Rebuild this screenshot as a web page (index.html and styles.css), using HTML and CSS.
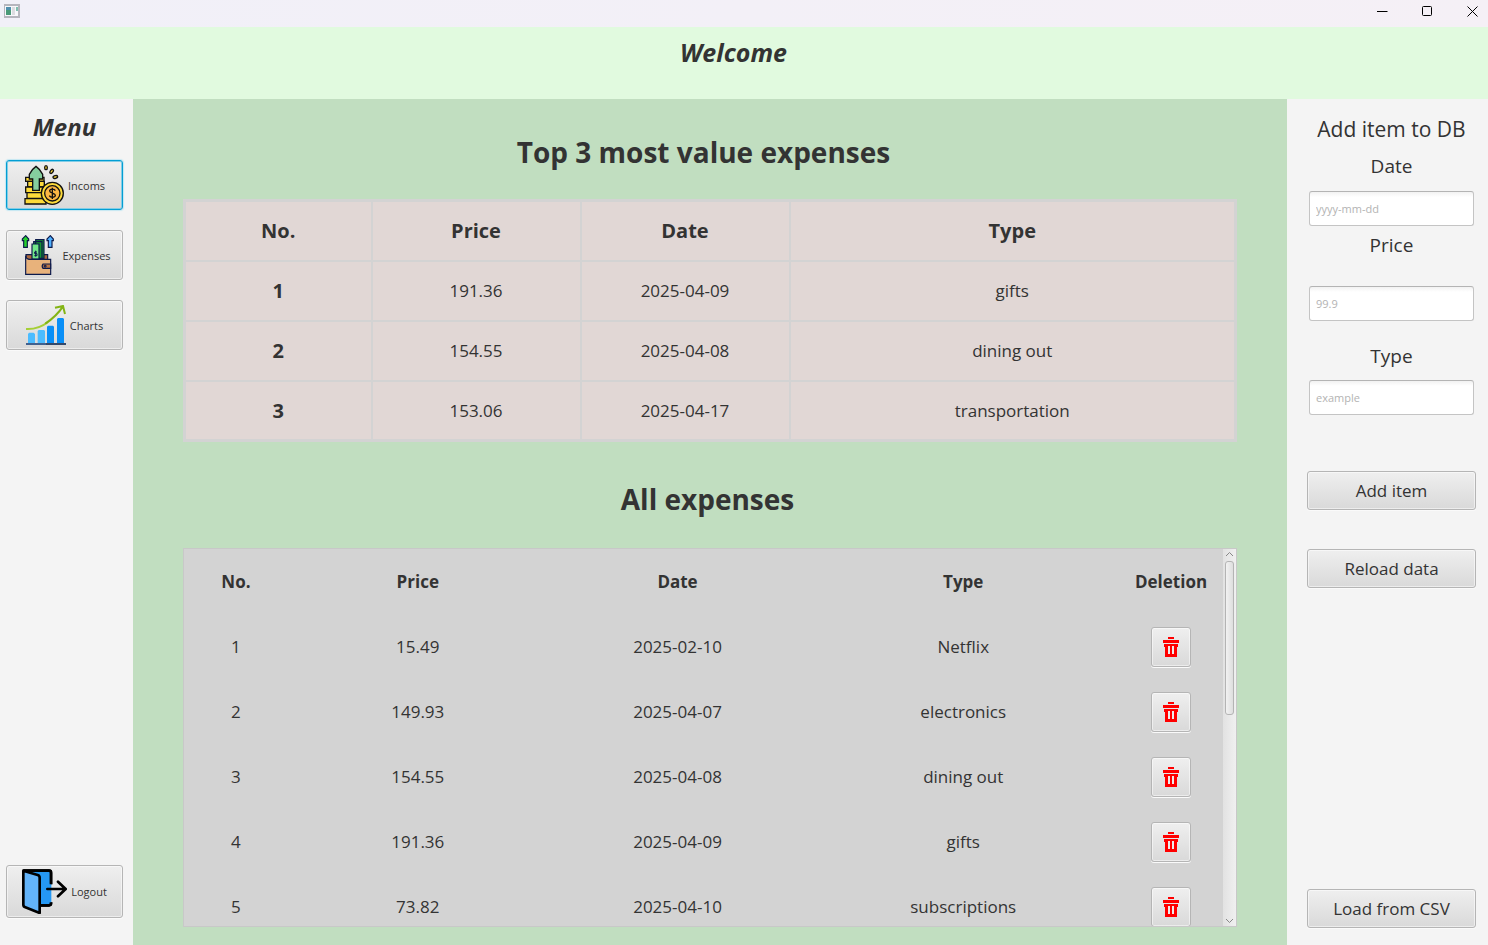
FILE: index.html
```
<!DOCTYPE html>
<html lang="en">
<head>
<meta charset="utf-8">
<title>Expenses</title>
<link rel="stylesheet" href="styles.css">
</head>
<body>
<svg class="sprite" aria-hidden="true">
  <symbol id="trash" viewBox="0 0 16 20">
    <path fill="#f00" d="M5 0h6v2H5zM0 3h16v3H0zM1 7h14v3h-1v10H2V10H1z"/>
    <path fill="#ececec" d="M5 9h2v8H5zM9 9h2v8H9z"/>
  </symbol>
</svg>
<div class="window">
  <div class="titlebar">
    <svg class="app-icon" width="16" height="14" viewBox="0 0 16 14" aria-hidden="true">
      <path fill="#b5b5bd" d="M0 0h16v14H0z"/>
      <path fill="#f7f7fa" d="M1 2h13v10H1z"/>
      <path fill="#4f8fae" d="M2 3h5v8H2z"/>
      <path fill="#4a9a78" d="M2 6h5v5H2z"/>
      <path fill="#dcdce0" d="M8 3h3v8H8z"/>
      <path fill="#7fbfb0" d="M12 3h2v4h-2z"/>
    </svg>
    <div class="window-controls">
      <button type="button" class="window-button" aria-label="Minimize"><svg width="11" height="11" viewBox="0 0 11 11"><path d="M0 5.500h10.500"/></svg></button>
      <button type="button" class="window-button" aria-label="Maximize"><svg width="11" height="11" viewBox="0 0 11 11"><rect x=".5" y=".5" width="9" height="9" rx="1"/></svg></button>
      <button type="button" class="window-button" aria-label="Close"><svg width="11" height="11" viewBox="0 0 11 11"><path d="M.5.500l10 10M10.500.500l-10 10"/></svg></button>
    </div>
  </div>
  <header class="banner"><h1 class="banner-title">Welcome</h1></header>
  <div class="content">
    <nav class="menu">
      <h2 class="menu-title">Menu</h2>
      <button type="button" class="button menu-button focused">
        <svg width="40" height="41" viewBox="72 45 120 123" aria-hidden="true">
          <g stroke="#111" stroke-width="4" fill="#fddb3a">
            <path d="M77 82h55v12H77z"/><path d="M83 94h50v17H83z"/>
            <path d="M77 111h56v17H77z"/><path d="M81 128h50v17H81z"/>
            <path d="M75 146h63v16H75z"/>
            <path fill="#85cf9f" d="M108 49q12 8 20 24v14h-10v34H98V87H88V73q8-16 20-24z"/>
            <circle cx="157" cy="130" r="33"/>
            <circle cx="157" cy="130" r="23" fill="#fbb743"/>
            <ellipse cx="138" cy="53" rx="4" ry="6"/>
            <ellipse cx="155" cy="64" rx="4" ry="7" transform="rotate(35 155 64)"/>
            <ellipse cx="166" cy="81" rx="7" ry="4" transform="rotate(-15 166 81)"/>
          </g>
          <path fill="none" stroke="#111" stroke-width="4" d="M166 122c-3-6-17-6-17 1s17 6 17 13-14 8-18 1M157 113v34"/>
        </svg>
        <span>Incoms</span>
      </button>
      <button type="button" class="button menu-button">
        <svg width="40" height="40" viewBox="54 39 120 120" aria-hidden="true">
          <g stroke="#0c1a4b" stroke-width="3.500">
            <path fill="#25d12c" d="M77 41l9 10v5h-4v20H71V56h-4v-5z"/>
            <path fill="#4eb0ff" d="M151 41l9 10v5h-4v20h-11V56h-4v-5z"/>
            <path fill="#a8673d" d="M78 98h65v16H78z"/>
            <path fill="#159333" d="M107 53h25v56h-25zM101 59h25v50h-25z"/>
            <path fill="#71e889" d="M96 66h21v45H96z"/>
            <path fill="#e8b27b" d="M77 101q2 11 12 11h63v45H77z"/>
            <path fill="#b97545" d="M129 126h23v13h-23q-5-6 0-13z"/>
          </g>
          <path fill="none" stroke="#0c1a4b" stroke-width="3" d="M111 90h-7v5h7v6h-8M107 86v18M133 130h5v5h-5z"/>
        </svg>
        <span>Expenses</span>
      </button>
      <button type="button" class="button menu-button">
        <svg width="40" height="40" viewBox="78 42 120 120" aria-hidden="true">
          <path fill="#4bbcff" d="M84 129l3-4h14l4 4v27H84zM113 120l3-3h16l3 3v36h-22z"/>
          <path fill="#098ff7" d="M141 107l3-3h15l3 3v49h-21zM171 84l3-3h15l3 3v72h-21z"/>
          <path fill="#41618e" d="M78 156h60v6H78z"/><path fill="#34496a" d="M138 156h60v6h-60z"/>
          <path fill="none" stroke="#a5cf35" stroke-width="6" d="M78 114q37 2 66-21"/>
          <path fill="none" stroke="#83b414" stroke-width="6" d="M136 98q34-23 53-52M165 50l24-5 6 24"/>
        </svg>
        <span>Charts</span>
      </button>
      <button type="button" class="button menu-button logout">
        <svg width="45" height="45" viewBox="63 38 135 135" aria-hidden="true">
          <path fill="#2598f4" stroke="#000" stroke-width="8" stroke-linejoin="round" d="M117 147h27q6 0 6-6v-3M150 84V49q0-6-6-6H67"/>
          <path fill="#2598f4" d="M117 47h29v96h-29zM144 82h7v58h-7z"/>
          <path fill="none" stroke="#000" stroke-width="8" d="M67 43h77q6 0 6 6v35M150 138v3q0 6-6 6h-27"/>
          <path fill="#63b4fa" stroke="#000" stroke-width="8" stroke-linejoin="round" d="M67 43l43 13q6 2 6 8v106l-43-17q-6-2-6-8z"/>
          <path fill="none" stroke="#000" stroke-width="8" stroke-linecap="round" stroke-linejoin="round" d="M139 98h54M171 76l23 22-23 22"/>
        </svg>
        <span>Logout</span>
      </button>
    </nav>
    <main class="main">
      <h2 class="section-title top-title">Top 3 most value expenses</h2>
      <table class="top-table">
        <colgroup><col class="w-no"><col class="w-mid"><col class="w-mid"><col></colgroup>
        <thead><tr><th>No.</th><th>Price</th><th>Date</th><th>Type</th></tr></thead>
        <tbody>
          <tr><th>1</th><td>191.36</td><td>2025-04-09</td><td>gifts</td></tr>
          <tr><th>2</th><td>154.55</td><td>2025-04-08</td><td>dining out</td></tr>
          <tr><th>3</th><td>153.06</td><td>2025-04-17</td><td>transportation</td></tr>
        </tbody>
      </table>
      <h2 class="section-title all-title">All expenses</h2>
      <div class="scroller">
        <div class="viewport">
          <table class="all-table">
            <colgroup><col class="c10"><col class="c25"><col class="c25"><col class="c30"><col class="c10"></colgroup>
            <thead><tr><th>No.</th><th>Price</th><th>Date</th><th>Type</th><th>Deletion</th></tr></thead>
            <tbody>
              <tr><td>1</td><td>15.49</td><td>2025-02-10</td><td>Netflix</td><td><button type="button" class="button delete" aria-label="Delete 1"><svg width="16" height="20"><use href="#trash"/></svg></button></td></tr>
              <tr><td>2</td><td>149.93</td><td>2025-04-07</td><td>electronics</td><td><button type="button" class="button delete" aria-label="Delete 2"><svg width="16" height="20"><use href="#trash"/></svg></button></td></tr>
              <tr><td>3</td><td>154.55</td><td>2025-04-08</td><td>dining out</td><td><button type="button" class="button delete" aria-label="Delete 3"><svg width="16" height="20"><use href="#trash"/></svg></button></td></tr>
              <tr><td>4</td><td>191.36</td><td>2025-04-09</td><td>gifts</td><td><button type="button" class="button delete" aria-label="Delete 4"><svg width="16" height="20"><use href="#trash"/></svg></button></td></tr>
              <tr><td>5</td><td>73.82</td><td>2025-04-10</td><td>subscriptions</td><td><button type="button" class="button delete" aria-label="Delete 5"><svg width="16" height="20"><use href="#trash"/></svg></button></td></tr>
            </tbody>
          </table>
        </div>
        <div class="scrollbar" aria-hidden="true">
          <svg width="9" height="6" viewBox="0 0 9 6"><path d="M1 5l3.500-3.500L8 5"/></svg>
          <div class="track"><div class="thumb"></div></div>
          <svg width="9" height="6" viewBox="0 0 9 6"><path d="M1 1l3.500 3.500L8 1"/></svg>
        </div>
      </div>
    </main>
    <aside class="form">
      <h2 class="form-title">Add item to DB</h2>
      <label class="label date-label" for="date">Date</label>
      <input class="field" id="date" type="text" placeholder="yyyy-mm-dd">
      <label class="label price-label" for="price">Price</label>
      <input class="field" id="price" type="text" placeholder="99.9">
      <label class="label type-label" for="type">Type</label>
      <input class="field" id="type" type="text" placeholder="example">
      <button type="button" class="button action add">Add item</button>
      <button type="button" class="button action reload">Reload data</button>
      <button type="button" class="button action load">Load from CSV</button>
    </aside>
  </div>
</div>
</body>
</html>
```
FILE: styles.css
```
* { box-sizing: border-box; }
body { margin: 0; font-family: "Open Sans", "Noto Sans", sans-serif; color: #333; }
h1, h2 { margin: 0; }
button, input { font-family: inherit; color: inherit; }
svg { display: block; flex: none; }
.sprite { display: none; }

.window { display: flex; flex-direction: column; height: 100vh; background: #f4f4f4; }
.titlebar { display: flex; justify-content: space-between; height: 27px; padding-left: 4px; background: linear-gradient(90deg, #f1f0f8, #f5f0f6); }
.app-icon { margin-top: 4px; }
.window-controls { display: flex; }
.window-button { display: flex; align-items: center; justify-content: center; width: 46px; height: 22px; margin-right: -1px; padding: 0 0 0 12px; border: 0; background: none; }
.window-button path, .window-button rect { fill: none; stroke: #000; stroke-width: 1; }
.banner { height: 72px; padding: 8px 21px 0 0; background: #e1fadf; text-align: center; }
.banner-title, .menu-title { font-size: 24px; line-height: 34px; font-weight: 700; font-style: italic; text-align: center; }
.banner-title { font-size: 25px; }
.content { display: flex; flex: 1; min-height: 0; }

.button { display: flex; align-items: center; justify-content: center; padding: 0; border: 1px solid #b5b5b5; border-radius: 3px; background: linear-gradient(#efefef, #d9d9d9); box-shadow: inset 0 0 0 1px rgba(255, 255, 255, .5), 0 1px 0 #fafafa; }

.menu { display: flex; flex-direction: column; flex: none; width: 133px; padding: 11px 10px 27px 6px; }
.menu-title { margin-bottom: 16px; }
.menu-button { gap: 4px; height: 50px; margin-bottom: 20px; font-size: 11px; }
.focused { border-color: #039ed3; box-shadow: inset 0 0 0 1px #83cde6, 0 0 1px 1px #c4e7f2; }
.logout { height: 53px; margin: auto 0 0; }

.main { display: flex; flex-direction: column; flex: 1; min-width: 0; padding: 33px 50px 18px; background: #c1dec0; }
.section-title { font-size: 28px; line-height: 40px; font-weight: 700; text-align: center; }
.top-title { padding-right: 13px; margin-bottom: 27px; }
.all-title { padding-right: 5px; margin: 37px 0 29px; }
table { width: 100%; table-layout: fixed; border-collapse: collapse; text-align: center; font-size: 17px; }
th, td { padding: 0; }
.top-table { border: 3px solid #d3d3d3; background: #e1d7d5; }
.top-table th, .top-table td { height: 60px; border: 2px solid #d3d3d3; }
.top-table th { font-size: 20px; }
.w-no { width: 187px; }
.w-mid { width: 209px; }

.scroller { display: flex; flex: 1; min-height: 0; border: 1px solid #c8c8c8; background: #d3d3d3; }
.viewport { flex: 1; min-width: 0; overflow: hidden; }
.all-table th, .all-table td { height: 65px; }
.c10 { width: 10%; }
.c25 { width: 25%; }
.c30 { width: 30%; }
.delete { width: 40px; height: 40px; margin: 0 auto; }
.scrollbar { display: flex; flex-direction: column; align-items: center; flex: none; width: 13px; padding: 2px 1px 2px 0; background: linear-gradient(90deg, #e2e2e2, #f0f0f0); }
.scrollbar path { fill: none; stroke: #888; stroke-width: 1; }
.track { flex: 1; padding-top: 4px; }
.thumb { width: 9px; height: 43%; border: 1px solid #b4b4b4; border-radius: 3px; background: linear-gradient(90deg, #f2f2f2, #dedede); }

.form { display: flex; flex-direction: column; flex: none; width: 201px; padding: 15px 12px 17px 20px; text-align: center; }
.form-title { font-size: 21px; line-height: 30px; font-weight: 400; }
.label { font-size: 19px; line-height: 28px; }
.date-label { margin: 8px 0 11px; }
.price-label { margin: 5px 0 27px; }
.type-label { margin: 21px 0 10px; }
.field { height: 35px; margin: 0 2px; padding: 0 6px; border: 1px solid #c4c4c4; border-top-color: #b4b4b4; border-radius: 3px; background: linear-gradient(#f2f2f2, #fff 5px); font-size: 11px; }
.field::placeholder { color: #b3b3b3; opacity: 1; }
.action { flex: none; height: 39px; font-size: 17px; }
.add { margin-top: 56px; }
.reload { margin-top: 39px; }
.load { margin-top: auto; }
```
